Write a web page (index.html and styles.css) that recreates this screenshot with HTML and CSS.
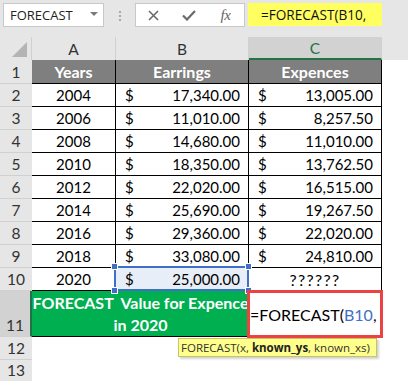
FILE: index.html
```html
<!DOCTYPE html>
<html>
<head>
<meta charset="utf-8">
<link rel="stylesheet" href="styles.css">
</head>
<body>
<div class="top">
  <div class="namebox"><span>FORECAST</span><span class="caret"></span></div>
  <div class="dots"><i></i><i></i><i></i></div>
  <div class="fxbox">
    <span class="slot s1"><svg width="11" height="11" viewBox="0 0 11 11"><path d="M1 1 L10 10 M10 1 L1 10" stroke="#6a6a6a" stroke-width="1.6" fill="none"/></svg></span>
    <span class="slot s2"><svg width="14" height="11" viewBox="0 0 14 11"><path d="M1 5.5 L5 9.5 L13 1" stroke="#6a6a6a" stroke-width="2.2" fill="none"/></svg></span>
    <span class="slot s3">fx</span>
  </div>
  <div class="formula">=FORECAST(B10,</div>
</div>
<div class="sheet">
  <div class="corner"><span class="tri"></span></div>
  <div class="ch">A</div>
  <div class="ch">B</div>
  <div class="ch sel-col">C</div>
  <div class="ch blank"></div>

  <div class="rh">1</div>
  <div class="hd">Years</div>
  <div class="hd">Earrings</div>
  <div class="hd">Expences</div>
  <div class="out"></div>

  <div class="rh">2</div><div class="c yr">2004</div><div class="c cur"><span>$</span><span>17,340.00</span></div><div class="c cur"><span>$</span><span>13,005.00</span></div><div class="out"></div>
  <div class="rh">3</div><div class="c yr">2006</div><div class="c cur"><span>$</span><span>11,010.00</span></div><div class="c cur"><span>$</span><span>8,257.50</span></div><div class="out"></div>
  <div class="rh">4</div><div class="c yr">2008</div><div class="c cur"><span>$</span><span>14,680.00</span></div><div class="c cur"><span>$</span><span>11,010.00</span></div><div class="out"></div>
  <div class="rh">5</div><div class="c yr">2010</div><div class="c cur"><span>$</span><span>18,350.00</span></div><div class="c cur"><span>$</span><span>13,762.50</span></div><div class="out"></div>
  <div class="rh">6</div><div class="c yr">2012</div><div class="c cur"><span>$</span><span>22,020.00</span></div><div class="c cur"><span>$</span><span>16,515.00</span></div><div class="out"></div>
  <div class="rh">7</div><div class="c yr">2014</div><div class="c cur"><span>$</span><span>25,690.00</span></div><div class="c cur"><span>$</span><span>19,267.50</span></div><div class="out"></div>
  <div class="rh">8</div><div class="c yr">2016</div><div class="c cur"><span>$</span><span>29,360.00</span></div><div class="c cur"><span>$</span><span>22,020.00</span></div><div class="out"></div>
  <div class="rh">9</div><div class="c yr">2018</div><div class="c cur"><span>$</span><span>33,080.00</span></div><div class="c cur"><span>$</span><span>24,810.00</span></div><div class="out"></div>
  <div class="rh">10</div><div class="c yr">2020</div>
  <div class="c cur b10"><span>$</span><span>25,000.00</span><span class="selbox"><i class="h tl"></i><i class="h tr"></i><i class="h bl"></i><i class="h br"></i></span></div>
  <div class="c yr q">??????</div><div class="out"></div>

  <div class="rh sel-row">11</div>
  <div class="green">FORECAST  Value for Expence<br>in 2020</div>
  <div class="edit-cell"><span class="edit">=FORECAST(<span class="ref">B10</span>,</span></div>
  <div class="out"></div>

  <div class="rh">12</div><div class="empty"></div>
  <div class="rh">13</div><div class="empty"></div>

  <div class="tip">FORECAST(x, <b>known_ys</b>, known_xs)</div>
</div>
</body>
</html>
```

FILE: styles.css
```css
html, body {
  margin: 0;
  padding: 0;
}
body {
  width: 408px;
  height: 381px;
  overflow: hidden;
  background: #ffffff;
  font-family: Lato, "Liberation Sans", sans-serif;
  color: #000;
}

/* formula bar */
.top {
  height: 37px;
  box-sizing: border-box;
  background: #e6e6e6;
  display: flex;
  align-items: flex-start;
  padding: 3px 0 0 3px;
}
.namebox {
  width: 101px;
  height: 24px;
  box-sizing: border-box;
  background: #fff;
  border: 1px solid #c8c8c8;
  display: flex;
  align-items: center;
  justify-content: space-between;
  padding: 0 5px 0 6px;
  font-family: "Open Sans", sans-serif;
  font-size: 13px;
  color: #222;
}
.caret {
  width: 0;
  height: 0;
  border-left: 4px solid transparent;
  border-right: 4px solid transparent;
  border-top: 4px solid #7a7a7a;
  margin-bottom: 2px;
}
.dots {
  width: 31px;
  display: flex;
  flex-direction: column;
  align-items: center;
  gap: 2px;
  padding-top: 8px;
}
.dots i {
  display: block;
  width: 2px;
  height: 2px;
  background: #a8a8a8;
}
.fxbox {
  width: 110px;
  height: 24px;
  box-sizing: border-box;
  background: #fff;
  border: 1px solid #c8c8c8;
  display: flex;
  align-items: center;
}
.slot {
  display: flex;
  align-items: center;
  justify-content: center;
  height: 22px;
}
.s1 { width: 34px; }
.s2 { width: 38px; }
.s3 {
  width: 35px;
  font-family: "Liberation Serif", serif;
  font-style: italic;
  font-size: 15px;
  color: #666;
  letter-spacing: -0.5px;
}
.formula {
  margin-left: 3px;
  width: 134px;
  height: 23px;
  box-sizing: border-box;
  background: #ffff60;
  padding-left: 13px;
  font-family: "Open Sans", sans-serif;
  font-size: 13.6px;
  line-height: 23px;
  color: #111;
  white-space: nowrap;
}

/* grid */
.sheet {
  position: relative;
  display: grid;
  grid-template-columns: 32px 84px 133px 133px 26px;
  grid-template-rows: 23px 24px repeat(9, 23px) 46px 23px 22px;
  font-size: 15px;
}
.corner {
  background: #e6e6e6;
  border-right: 1px solid #d0d0d0;
  box-sizing: border-box;
  position: relative;
}
.tri {
  position: absolute;
  right: 4px;
  bottom: 3px;
  width: 0;
  height: 0;
  border-left: 15px solid transparent;
  border-bottom: 15px solid #b4b4b4;
}
.ch {
  background: #e6e6e6;
  border-right: 1px solid #d0d0d0;
  box-sizing: border-box;
  display: flex;
  align-items: center;
  justify-content: center;
  color: #333;
  font-size: 15.5px;
  padding-top: 1px;
}
.ch.blank {
  border-right: none;
}
.ch.sel-col {
  background: #d2d2d2;
  border-bottom: 2px solid #217346;
  color: #217346;
}
.rh {
  background: #e6e6e6;
  border-bottom: 1px solid #d0d0d0;
  box-sizing: border-box;
  display: flex;
  align-items: flex-end;
  justify-content: center;
  padding-bottom: 2px;
  color: #333;
  font-size: 15.5px;
}
.rh.sel-row {
  background: #d2d2d2;
  border-right: 2px solid #217346;
  color: #333;
}
.hd {
  background: #7f7f7f;
  color: #fff;
  font-weight: bold;
  font-size: 16px;
  border-right: 1px solid #000;
  border-bottom: 1px solid #000;
  box-sizing: border-box;
  display: flex;
  align-items: center;
  justify-content: center;
}
.c {
  border-right: 1px solid #000;
  border-bottom: 1px solid #000;
  box-sizing: border-box;
  display: flex;
  align-items: center;
}
.yr {
  justify-content: center;
}
.q {
  font-size: 16px;
  letter-spacing: 1.3px;
}
.cur {
  justify-content: space-between;
  padding: 0 8px 0 9px;
}
.b10 {
  position: relative;
  background: #e8eef8;
}
.selbox {
  position: absolute;
  left: -2px;
  top: -2px;
  right: -1px;
  bottom: -1px;
  border: 2px solid #3f6fc6;
}
.h {
  position: absolute;
  width: 5px;
  height: 5px;
  background: #3f6fc6;
  border: 1px solid #fff;
}
.tl { left: -5px; top: -5px; }
.tr { right: -5px; top: -5px; }
.bl { left: -5px; bottom: -5px; }
.br { right: -5px; bottom: -5px; }
.out, .empty {
  background: #fff;
}
.empty {
  grid-column: 2 / 6;
}
.green {
  grid-column: 2 / 4;
  background: #00b050;
  color: #fff;
  font-weight: bold;
  font-size: 16px;
  border-bottom: 1px solid #000;
  box-sizing: border-box;
  text-align: center;
  white-space: pre;
  line-height: 22px;
  padding-top: 1px;
}
.edit-cell {
  position: relative;
}
.edit {
  position: absolute;
  left: -2px;
  top: -1px;
  right: -1px;
  bottom: -1px;
  border: 3px solid #ec4242;
  background: #fff;
  display: flex;
  align-items: center;
  padding-left: 0;
  white-space: nowrap;
  font-size: 16px;
  color: #000;
}
.ref {
  color: #3f6fc6;
}
.tip {
  position: absolute;
  left: 178px;
  top: 301px;
  width: 199px;
  height: 19px;
  box-sizing: border-box;
  background: #ffff8c;
  border: 1px solid #c4c46a;
  box-shadow: 2px 2px 2px rgba(0, 0, 0, 0.18);
  font-family: "Open Sans", sans-serif;
  font-size: 11.5px;
  line-height: 17px;
  padding-left: 2px;
  color: #333;
  white-space: nowrap;
}
.tip b {
  color: #222;
}
```
